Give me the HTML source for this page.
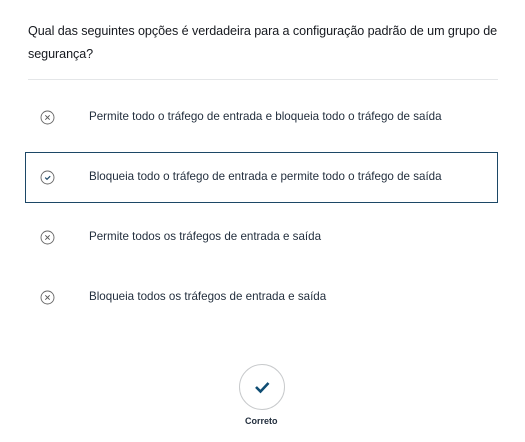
<html><head><style>
body{margin:0;width:525px;height:442px;background:#fff;font-family:"Liberation Sans",sans-serif;color:#16191f;position:relative;overflow:hidden}
.q{position:absolute;left:28px;top:20px;width:485px;font-size:12.6px;line-height:23px;letter-spacing:-0.07px}
.hr{position:absolute;left:28px;top:79px;width:470px;height:1px;background:#e4e6e8}
.opt{position:absolute;left:25px;width:473px;height:51px}
.opt.sel{border:1px solid #1c4766;box-sizing:border-box}
.opt svg{position:absolute;left:15px;top:18px}
.opt span{position:absolute;left:64px;top:18px;font-size:11.6px;line-height:14px;color:#232f3e}
.opt.sel svg{left:14px;top:17px}.opt.sel span{left:63px;top:17px}
.big{position:absolute;left:239px;top:364px;width:44px;height:44px;border:1px solid #c8cacc;border-radius:50%}
.c{position:absolute;left:245px;top:416px;font-size:9px;font-weight:bold;color:#232f3e}
</style></head><body>
<div class="q">Qual das seguintes opções é verdadeira para a configuração padrão de um grupo de segurança?</div>
<div class="hr"></div>
<div class="opt" style="top:92px"><svg width="15" height="15"><circle cx="7.5" cy="7.5" r="6.5" fill="none" stroke="#666" stroke-width="0.9"/><path d="M5.3 5.3L9.7 9.7M9.7 5.3L5.3 9.7" stroke="#555" stroke-width="0.9"/></svg><span>Permite todo o tráfego de entrada e bloqueia todo o tráfego de saída</span></div>
<div class="opt sel" style="top:152px"><svg width="15" height="15"><circle cx="7.5" cy="7.5" r="6.5" fill="none" stroke="#666" stroke-width="0.9"/><path d="M5.2 7.6L7 9.3L10.2 6.2" stroke="#1c4766" stroke-width="1.2" fill="none"/></svg><span>Bloqueia todo o tráfego de entrada e permite todo o tráfego de saída</span></div>
<div class="opt" style="top:212px"><svg width="15" height="15"><circle cx="7.5" cy="7.5" r="6.5" fill="none" stroke="#666" stroke-width="0.9"/><path d="M5.3 5.3L9.7 9.7M9.7 5.3L5.3 9.7" stroke="#555" stroke-width="0.9"/></svg><span>Permite todos os tráfegos de entrada e saída</span></div>
<div class="opt" style="top:272px"><svg width="15" height="15"><circle cx="7.5" cy="7.5" r="6.5" fill="none" stroke="#666" stroke-width="0.9"/><path d="M5.3 5.3L9.7 9.7M9.7 5.3L5.3 9.7" stroke="#555" stroke-width="0.9"/></svg><span>Bloqueia todos os tráfegos de entrada e saída</span></div>
<div class="big"><svg width="44" height="44" style="position:absolute;left:0;top:0"><path d="M16 22L20.5 26.5L28.5 18" stroke="#0f4d73" stroke-width="2.6" fill="none"/></svg></div>
<div class="c">Correto</div>
</body></html>
